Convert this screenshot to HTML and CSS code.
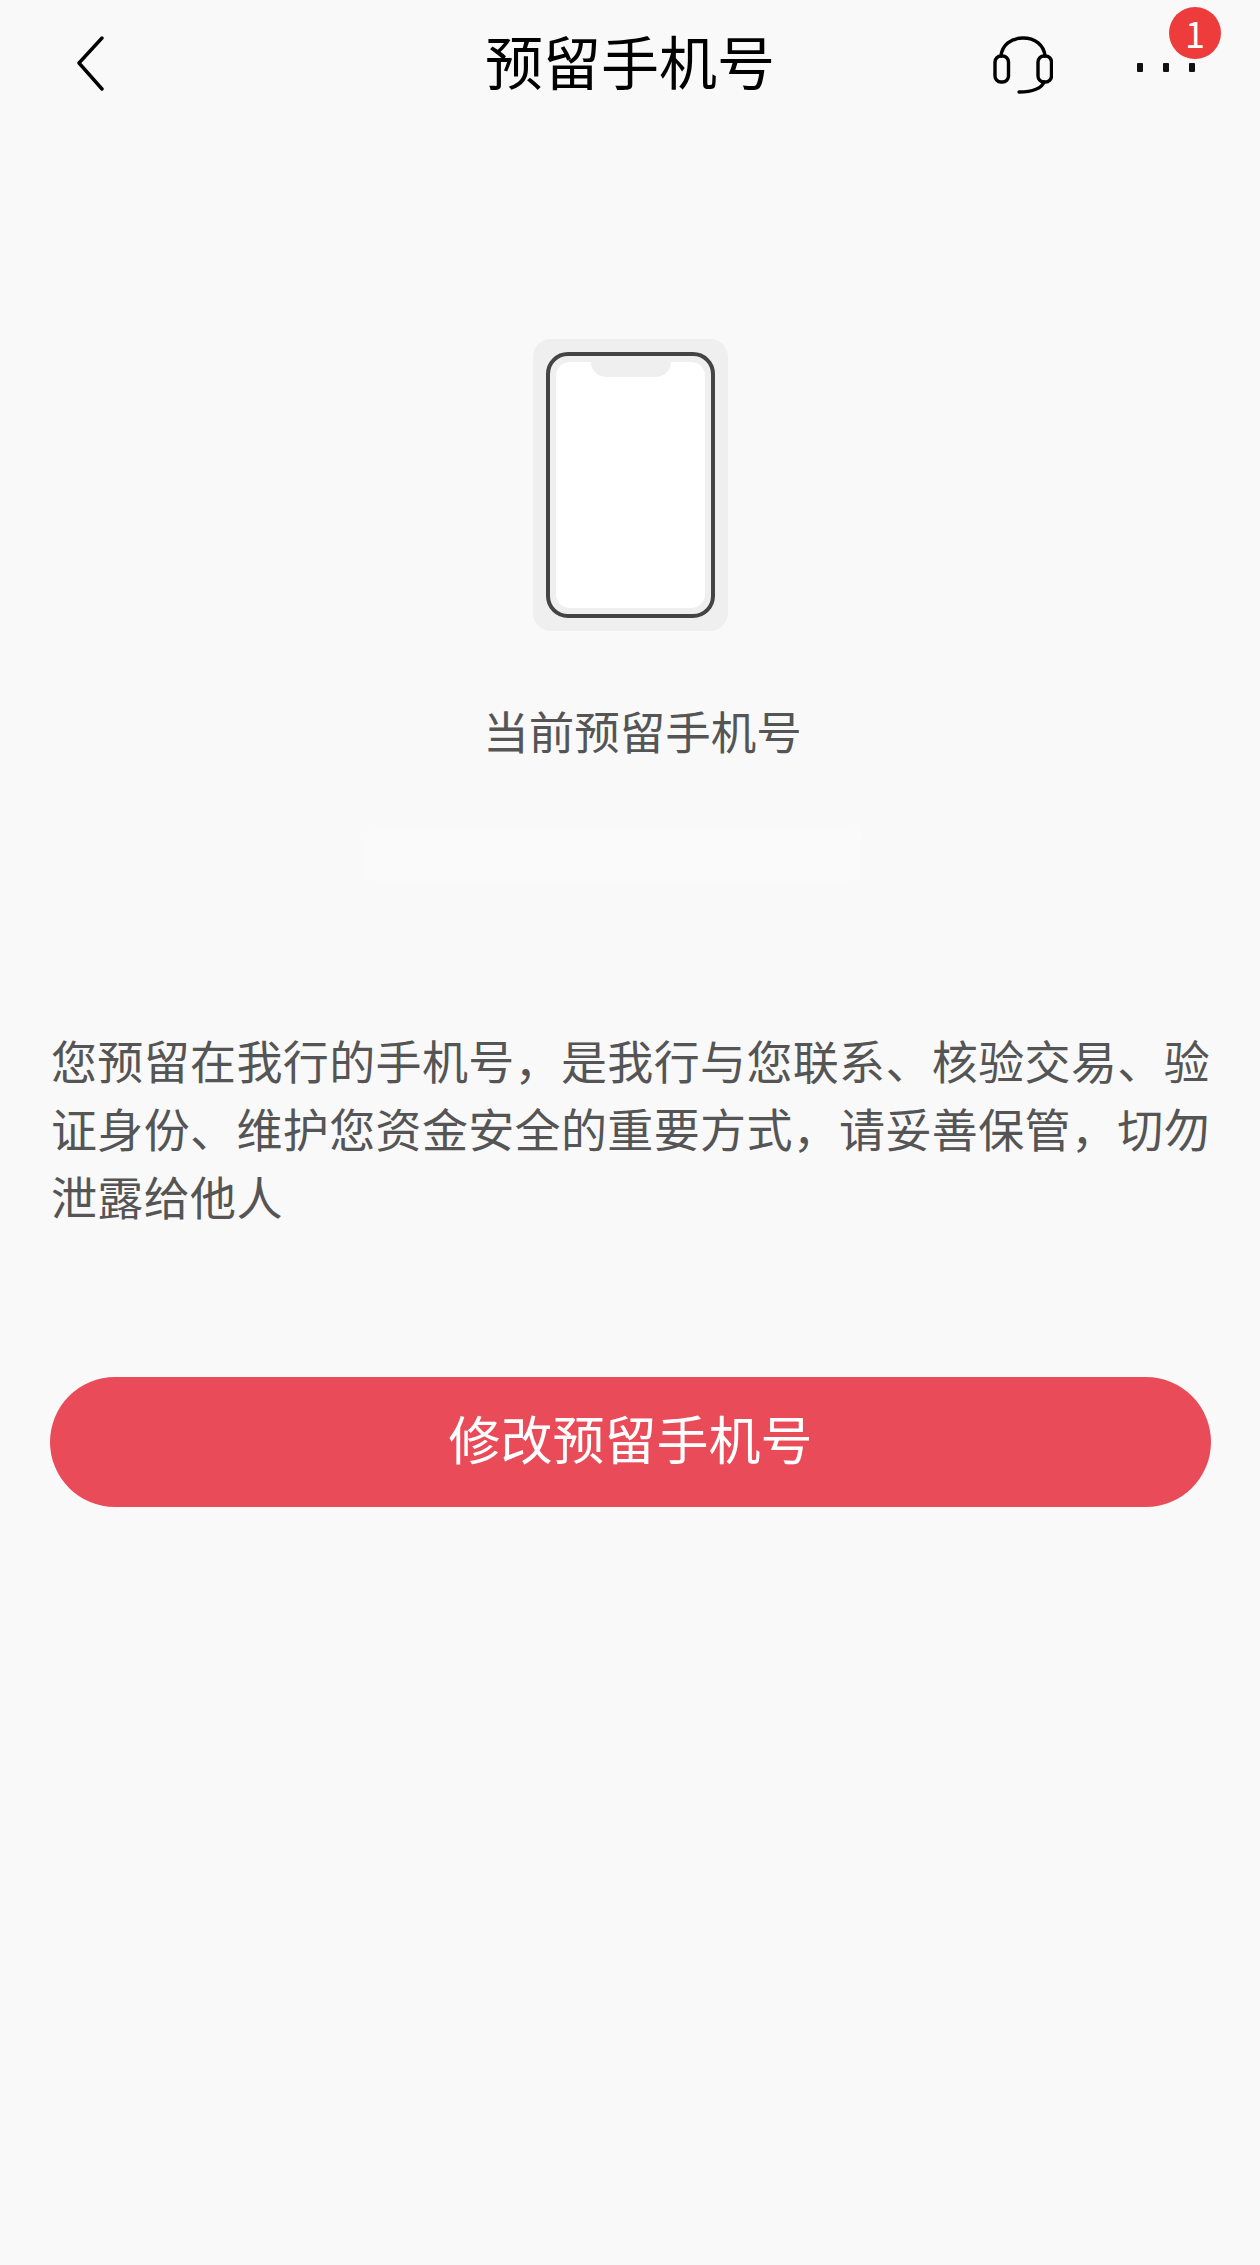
FILE: index.html
```html
<!DOCTYPE html>
<html lang="zh-CN">

<head>
  <meta charset="UTF-8">
  <meta name="viewport" content="width=device-width, initial-scale=1.0">
  <title>预留手机号</title>
  <link rel="stylesheet" href="styles.css">
</head>

<body>
  <header class="topbar">
    <a class="back" href="#" aria-label="返回">
      <svg viewBox="0 0 27 55" fill="none" stroke="currentColor" stroke-width="3.4" stroke-linecap="round" stroke-linejoin="round">
        <polyline points="25,2 2,27 25,53"></polyline>
      </svg>
    </a>
    <h1>预留手机号</h1>
    <div class="actions">
      <a class="service" href="#" aria-label="客服">
        <svg viewBox="0 0 60 58" fill="none" stroke="currentColor" stroke-width="3.4" stroke-linecap="round" stroke-linejoin="round">
          <path d="M8 20C9 9 18 2 30 2S51 9 52 20"></path>
          <rect x="2" y="20" width="13.5" height="26" rx="6"></rect>
          <rect x="45" y="20" width="13.5" height="26" rx="6"></rect>
          <path d="M51 46C49 52 40 56 26 56"></path>
        </svg>
      </a>
      <a class="more" href="#" aria-label="更多">
        <span class="dot"></span>
        <span class="dot"></span>
        <span class="dot"></span>
        <span class="badge">1</span>
      </a>
    </div>
  </header>

  <main>
    <div class="phone">
      <div class="phone-frame">
        <div class="phone-screen">
          <div class="phone-notch"></div>
        </div>
      </div>
    </div>

    <p class="label">当前预留手机号</p>
    <div class="masked"></div>

    <p class="notice">您预留在我行的手机号，是我行与您联系、核验交易、验证身份、维护您资金安全的重要方式，请妥善保管，切勿泄露给他人</p>

    <button class="primary">修改预留手机号</button>
  </main>
</body>

</html>
```

FILE: styles.css
```css
body {
  font-family: "Noto Sans CJK SC", "Noto Sans", sans-serif;
  background: #f9f9f9;
  color: #000;
  margin: 0;
  min-height: 2265px;
}

a {
  color: inherit;
  text-decoration: none;
}

.topbar {
  display: flex;
  align-items: center;
  justify-content: space-between;
  height: 126px;
  padding-inline: 77px 65px;
  position: relative;
}

.topbar h1 {
  position: absolute;
  left: 0;
  right: 0;
  top: -3px;
  margin: 0;
  font-size: 58px;
  font-weight: 400;
  line-height: 126px;
  text-align: center;
  pointer-events: none;
}

.back {
  display: block;
  width: 27px;
  height: 55px;
}

.back svg,
.service svg {
  display: block;
  width: 100%;
  height: 100%;
}

.actions {
  display: flex;
  align-items: center;
  gap: 84px;
}

.service {
  display: block;
  width: 60px;
  height: 58px;
  margin-top: 4px;
}

.more {
  display: flex;
  gap: 20px;
  margin-top: 8px;
  position: relative;
}

.dot {
  width: 6px;
  height: 9px;
  border-radius: 1px;
  background: #111;
}

.badge {
  position: absolute;
  top: -56px;
  right: -26px;
  width: 52px;
  height: 52px;
  border-radius: 50%;
  background: #ee3b3b;
  color: #fff;
  font-size: 36px;
  line-height: 50px;
  text-align: center;
}

main {
  display: flex;
  flex-direction: column;
  padding: 213px 49px 0 50px;
}

.phone {
  align-self: center;
  box-sizing: border-box;
  width: 195px;
  height: 292px;
  padding: 13px;
  background: #efeff0;
  border-radius: 18px;
}

.phone-frame {
  box-sizing: border-box;
  height: 100%;
  padding: 6px;
  background: #efeff0;
  border: 4.5px solid #444;
  border-radius: 22px;
}

.phone-screen {
  display: flex;
  justify-content: center;
  height: 100%;
  background: #fff;
  border-radius: 14px;
}

.phone-notch {
  width: 80px;
  height: 15px;
  background: #efeff0;
  border-radius: 0 0 20px 20px;
}

.label {
  margin: 66px 0 0 24px;
  font-size: 45.5px;
  line-height: 66px;
  color: #555;
  text-align: center;
}

.masked {
  align-self: center;
  width: 500px;
  height: 56px;
  margin-top: 62px;
  margin-right: 40px;
  background: #fafafa;
  border-radius: 8px;
  filter: blur(6px);
}

.notice {
  margin: 144px -3px 0 1px;
  font-size: 46px;
  letter-spacing: 0.36px;
  line-height: 68px;
  color: #555;
}

.primary {
  box-sizing: border-box;
  height: 130px;
  margin-top: 148px;
  padding: 0 0 8px;
  background: #e94b58;
  border: none;
  border-radius: 65px;
  color: #fff;
  font-family: inherit;
  font-size: 52px;
  line-height: 122px;
}
```
